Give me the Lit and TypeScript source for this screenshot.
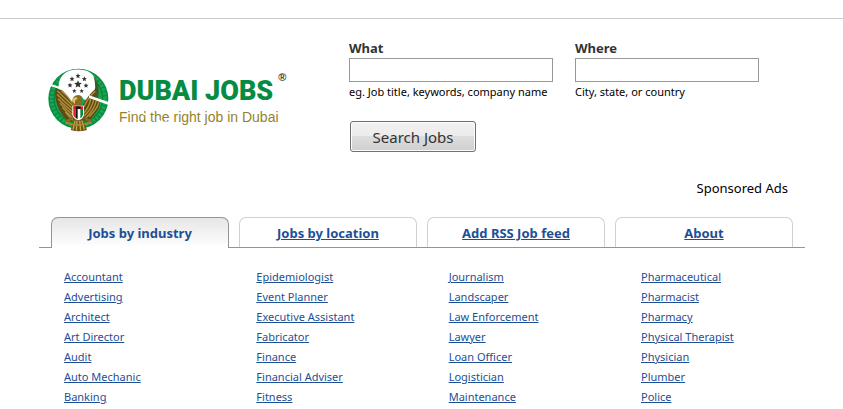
import { LitElement, html, css, svg } from "lit";
import { customElement, state } from "lit/decorators.js";

const TABS = ["Jobs by industry", "Jobs by location", "Add RSS Job feed", "About"];

const INDUSTRIES = [
  ["Accountant", "Advertising", "Architect", "Art Director", "Audit", "Auto Mechanic", "Banking"],
  ["Epidemiologist", "Event Planner", "Executive Assistant", "Fabricator", "Finance", "Financial Adviser", "Fitness"],
  ["Journalism", "Landscaper", "Law Enforcement", "Lawyer", "Loan Officer", "Logistician", "Maintenance"],
  ["Pharmaceutical", "Pharmacist", "Pharmacy", "Physical Therapist", "Physician", "Plumber", "Police"],
];

// Centre x, centre y and radius of each star over the eagle.
const STARS = [
  [114, 73, 12],
  [114, 48, 8],
  [96, 57, 8],
  [133, 57, 8],
  [90, 76, 8],
  [138, 77, 8],
  [103, 93, 7],
  [125, 93, 7],
];

function starPoints(cx: number, cy: number, r: number): string {
  return Array.from({ length: 10 }, (_, i) => {
    const radius = i % 2 ? r * 0.45 : r;
    const a = (Math.PI * i) / 5 - Math.PI / 2;
    return `${(cx + radius * Math.cos(a)).toFixed(1)},${(cy + radius * Math.sin(a)).toFixed(1)}`;
  }).join(" ");
}

@customElement("job-logo")
export class JobLogo extends LitElement {
  static styles = css`
    :host {
      display: flex;
      align-items: flex-start;
    }
    .emblem {
      width: 62px;
      height: 64px;
      flex: none;
      margin-right: 9px;
    }
    .words {
      position: relative;
      white-space: nowrap;
    }
    .name {
      display: flex;
      align-items: flex-start;
      gap: 5px;
      height: 38px;
      font: 900 27px/46px "Roboto", sans-serif;
      color: #058c42;
    }
    .mark {
      font: 700 11px/18px "Liberation Sans", sans-serif;
      color: #333;
    }
    .tagline {
      font: 14px/22px "Liberation Sans", sans-serif;
      color: #94832c;
    }
    .scratch {
      position: absolute;
      left: 22px;
      top: 41px;
      width: 30px;
      height: 18px;
    }
  `;

  render() {
    return html`
      <svg class="emblem" viewBox="24 24 186 192" role="img" aria-label="Eagle emblem">
        <circle cx="115" cy="116" r="90" fill="#0b8d43" />
        <circle cx="115" cy="116" r="80" fill="none" stroke="#18a854" stroke-width="11" stroke-dasharray="7 5" />
        <circle cx="115" cy="116" r="73" fill="#0c7a3b" />
        <circle cx="115" cy="116" r="71" fill="#17a350" />
        <path
          d="M56 90 C53 62 66 42 84 34 C100 27 133 26 149 37 C170 50 178 80 164 110 L148 114 C139 122 132 122 126 110 C119 104 110 104 104 111 L94 128 C80 117 66 106 56 90Z"
          fill="#fff"
        />
        <path d="M160 47 Q181 70 175 113 L158 110 Q172 80 160 47Z" fill="#3f5a25" />
        <path
          d="M47 84 C41 118 55 158 83 182 L103 184 L104 140 C94 125 84 105 68 92 C60 88 54 87 47 84Z"
          fill="#5d4a14"
        />
        <path
          d="M170 84 C153 96 135 120 126 142 L128 183 L146 181 C171 162 182 138 181 118 L160 110 C166 103 170 95 170 84Z"
          fill="#5d4a14"
        />
        <path
          d="M52 92 Q72 112 99 138 M51 103 Q71 124 99 147 M54 116 Q74 136 99 156 M60 130 Q79 149 99 165 M67 143 Q83 160 99 174 M76 156 Q88 171 99 181 M64 93 Q84 108 99 131"
          fill="none"
          stroke="#b39138"
          stroke-width="4"
        />
        <path
          d="M166 94 Q145 112 132 140 M152 117 Q147 143 131 160 M161 119 Q156 146 132 169 M169 122 Q164 148 135 177 M177 126 Q172 146 148 170"
          fill="none"
          stroke="#b39138"
          stroke-width="4"
        />
        <path d="M96 130 Q96 106 113 106 Q125 106 126 119 L123 130 L129 146 L97 146Z" fill="#8a6a20" />
        <path d="M96 124 Q98 112 109 111 L113 117 L106 120 L104 133 L100 127Z" fill="#e0c46c" />
        <path d="M98 168 L134 168 L131 186 L141 210 Q116 218 92 210 L101 186Z" fill="#6d5518" />
        <path d="M105 182 L99 209 M111 182 L109 212 M119 182 L122 212 M126 182 L133 209" stroke="#c3a84c" stroke-width="4" />
        <path d="M97 172 L79 189 M93 178 L76 183 M134 172 L152 188 M138 178 L155 183" stroke="#8a6a20" stroke-width="7" />
        <path d="M76 187 Q115 203 154 187" fill="none" stroke="#ab8830" stroke-width="6" />
        <path d="M97 137 H132 V164 Q130 176 115 181 Q99 176 97 164Z" fill="#fff" />
        <path d="M100 139 H107 V174 Q100 170 100 164Z" fill="#df1f2b" />
        <path d="M107 147 H113 V177 L107 174Z" fill="#151515" />
        <path d="M121 147 H129 V163 Q128 171 121 175Z" fill="#008b42" />
        <path d="M100 139 H129 V147 H100Z" fill="#df1f2b" />
        <path d="M107 139 H122 V147 H107Z" fill="#151515" />
        <path d="M24 69 L66 83 L65 89 L24 76Z M147 106 L208 127 L206 135 L147 114Z" fill="#fff" />
        ${STARS.map(([x, y, r]) => svg`<polygon points=${starPoints(x, y, r)} fill="#333" />`)}
      </svg>
      <div class="words">
        <div class="name">DUBAI JOBS <span class="mark">®</span></div>
        <div class="tagline">Find the right job in Dubai</div>
        <svg class="scratch" viewBox="0 0 30 18" aria-hidden="true">
          <path d="M0 3 L5 6 M8 12 L13 15 M17 11 L21 14 M24 13 L29 15" stroke="#fff" stroke-width="2" />
        </svg>
      </div>
    `;
  }
}

@customElement("app-root")
export class AppRoot extends LitElement {
  @state() private active = 0;

  static styles = css`
    :host {
      display: block;
      background: #fff;
      color: #000;
      font: 11px/20px "Noto Sans", "Open Sans", sans-serif;
    }
    * {
      box-sizing: border-box;
    }
    .topline {
      height: 19px;
      border-bottom: 1px solid #ccc;
    }
    .page {
      max-width: 1000px;
      margin: 0 auto;
      padding: 0 38px 0 39px;
    }
    .header {
      display: grid;
      grid-template-columns: 301px 1fr;
      padding: 19px 0 0 9px;
    }
    .logo {
      padding-top: 30px;
    }
    .fields {
      display: flex;
      gap: 22px;
    }
    .field {
      flex: 0 1 184px;
    }
    .field.wide {
      flex-basis: 204px;
    }
    .label {
      display: block;
      font-size: 13px;
      font-weight: 700;
      color: #333;
    }
    .box {
      display: block;
      width: 100%;
      height: 24px;
      border: 1px solid #999;
      padding: 0 4px;
      background: #fff;
      font: inherit;
    }
    .hint {
      white-space: nowrap;
    }
    .search {
      width: 126px;
      height: 31px;
      margin: 19px 0 0 1px;
      padding: 0;
      border: 1px solid #707070;
      border-radius: 3px;
      background: linear-gradient(#f2f2f2, #ebebeb 50%, #dddddd 50%, #cfcfcf);
      box-shadow: inset 0 0 0 1px #fcfcfc;
      font: 15px/20px "Noto Sans", sans-serif;
      color: #333;
    }
    .ads {
      padding: 26px 17px 0 0;
      font-size: 13px;
      text-align: right;
    }
    .tabs {
      display: flex;
      gap: 10px;
      margin-top: 19px;
      padding: 0 12px;
      background: linear-gradient(#949494, #949494) bottom / 100% 1px no-repeat;
    }
    .tab {
      flex: 1;
      height: 30px;
      margin-bottom: 1px;
      border: 1px solid #d0d0d0;
      border-bottom: 0;
      border-radius: 7px 7px 0 0;
      background: #fff;
      color: #1d4f97;
      font-size: 13px;
      line-height: 31px;
      font-weight: 700;
      text-align: center;
      white-space: nowrap;
    }
    .tab.active {
      height: 31px;
      margin-bottom: 0;
      border-color: #949494;
      background: linear-gradient(#e6e6e6, #fff);
      text-decoration: none;
    }
    .lists {
      display: grid;
      grid-template-columns: repeat(3, 1fr) 164px;
      padding: 19px 0 0 25px;
    }
    .list {
      margin: 0;
      padding: 0;
      list-style: none;
    }
    .link {
      color: #1d4f97;
    }
  `;

  render() {
    return html`
      <div class="topline"></div>
      <main class="page">
        <header class="header">
          <job-logo class="logo"></job-logo>
          <form @submit=${(e: Event) => e.preventDefault()}>
            <div class="fields">
              <div class="field wide">
                <label class="label" for="what">What</label>
                <input class="box" id="what" type="text" aria-describedby="what-hint" />
                <div class="hint" id="what-hint">eg. Job title, keywords, company name</div>
              </div>
              <div class="field">
                <label class="label" for="where">Where</label>
                <input class="box" id="where" type="text" aria-describedby="where-hint" />
                <div class="hint" id="where-hint">City, state, or country</div>
              </div>
            </div>
            <button class="search" type="submit">Search Jobs</button>
          </form>
        </header>
        <div class="ads">Sponsored Ads</div>
        <nav class="tabs">
          ${TABS.map(
            (name, i) => html`<a
              class="tab ${i === this.active ? "active" : ""}"
              href="#"
              @click=${() => (this.active = i)}
              >${name}</a
            >`
          )}
        </nav>
        <section class="lists">
          ${INDUSTRIES.map(
            (column) => html`<ul class="list">
              ${column.map((job) => html`<li><a class="link" href="#">${job}</a></li>`)}
            </ul>`
          )}
        </section>
      </main>
    `;
  }
}
